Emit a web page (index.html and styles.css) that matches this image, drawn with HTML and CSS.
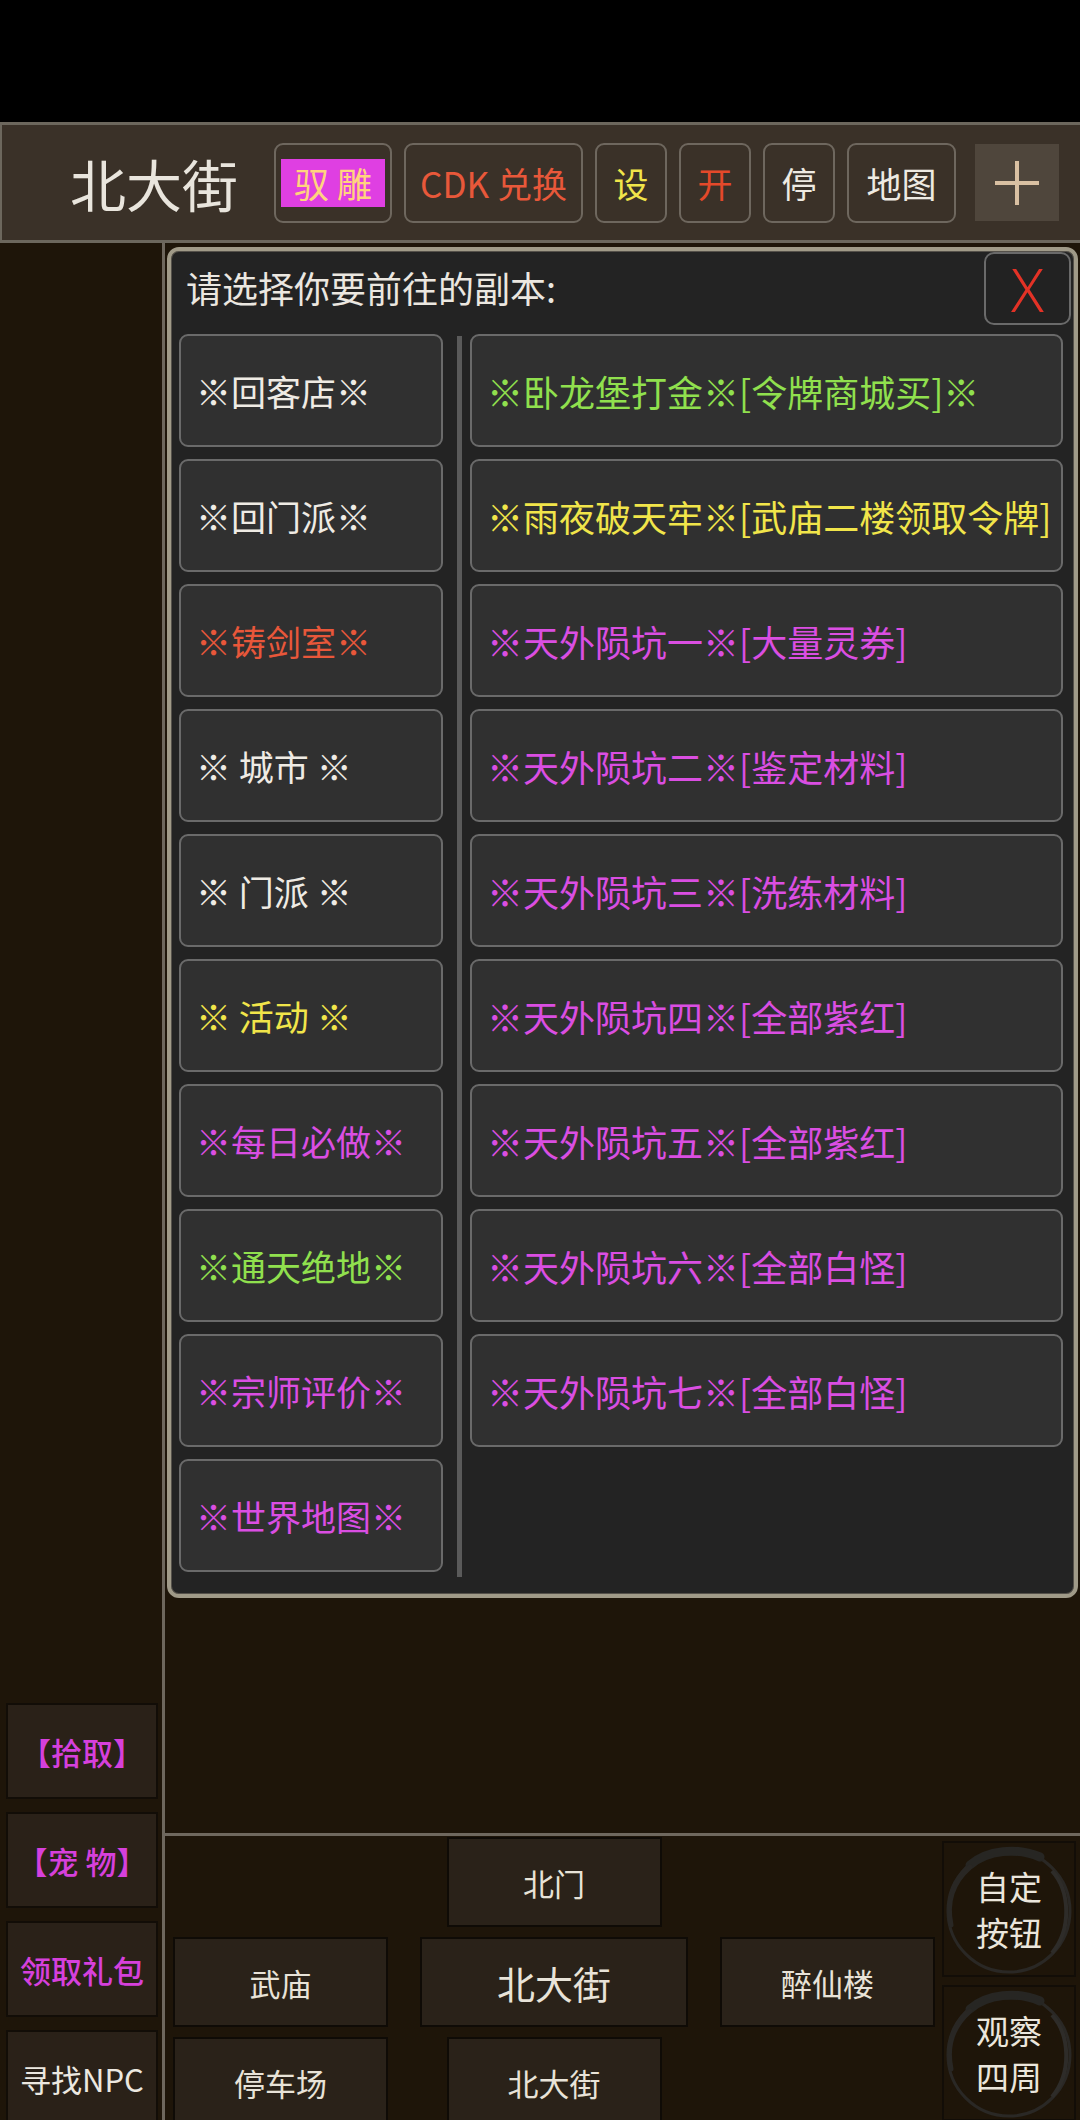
FILE: index.html
```html
<!DOCTYPE html>
<html lang="zh-CN">
<head>
<meta charset="utf-8">
<title>北大街</title>
<link rel="stylesheet" href="styles.css">
</head>
<body>
<div class="app">
  <div class="statusbar"></div>
  <header class="topbar">
    <h1 class="loc">北大街</h1>
    <div class="tools">
      <button class="tbtn w-diao"><span class="diao">驭 雕</span></button>
      <button class="tbtn w-cdk c-orange">CDK 兑换</button>
      <button class="tbtn w-sm c-yellow">设</button>
      <button class="tbtn w-sm c-red">开</button>
      <button class="tbtn w-sm">停</button>
      <button class="tbtn w-map">地图</button>
      <button class="plus" aria-label="更多">
        <svg width="84" height="77" viewBox="0 0 84 77"><path d="M20 39H64M42 17V61" stroke="#d9c0a2" stroke-width="4" fill="none"/></svg>
      </button>
    </div>
  </header>
  <div class="content">
    <aside class="side">
      <button class="sbtn c-mag">【拾取】</button>
      <button class="sbtn c-mag">【宠 物】</button>
      <button class="sbtn c-mag">领取礼包</button>
      <button class="sbtn">寻找NPC</button>
    </aside>
    <main class="stage">
      <section class="dialog">
        <div class="dlg-head">
          <span class="dlg-title">请选择你要前往的副本:</span>
          <button class="close">X</button>
        </div>
        <div class="dlg-body">
          <div class="col col-left">
            <div class="cell">※回客店※</div>
            <div class="cell">※回门派※</div>
            <div class="cell c-orange">※铸剑室※</div>
            <div class="cell">※ 城市 ※</div>
            <div class="cell">※ 门派 ※</div>
            <div class="cell c-yellow">※ 活动 ※</div>
            <div class="cell c-mag">※每日必做※</div>
            <div class="cell c-green">※通天绝地※</div>
            <div class="cell c-mag">※宗师评价※</div>
            <div class="cell c-mag">※世界地图※</div>
          </div>
          <div class="sep"></div>
          <div class="col col-right">
            <div class="cell c-green">※卧龙堡打金※[令牌商城买]※</div>
            <div class="cell c-yellow">※雨夜破天牢※[武庙二楼领取令牌]</div>
            <div class="cell c-mag">※天外陨坑一※[大量灵券]</div>
            <div class="cell c-mag">※天外陨坑二※[鉴定材料]</div>
            <div class="cell c-mag">※天外陨坑三※[洗练材料]</div>
            <div class="cell c-mag">※天外陨坑四※[全部紫红]</div>
            <div class="cell c-mag">※天外陨坑五※[全部紫红]</div>
            <div class="cell c-mag">※天外陨坑六※[全部白怪]</div>
            <div class="cell c-mag">※天外陨坑七※[全部白怪]</div>
          </div>
        </div>
      </section>
      <div class="spacer"></div>
      <nav class="nav">
        <div class="nav-grid">
          <button class="nbtn n-north">北门</button>
          <button class="nbtn n-west">武庙</button>
          <button class="nbtn n-here">北大街</button>
          <button class="nbtn n-east">醉仙楼</button>
          <button class="nbtn n-sw">停车场</button>
          <button class="nbtn n-south">北大街</button>
        </div>
        <div class="nav-tools">
          <button class="ring-btn">
            <svg class="ring" width="134" height="136" viewBox="0 0 134 136"><circle cx="67" cy="70" r="61" stroke="#2a2825" stroke-width="3" fill="none"/><path d="M28 24C45 9 75 6 98 16" stroke="#272623" stroke-width="9" fill="none" stroke-linecap="round"/><path d="M9 84C4 60 12 40 28 26" stroke="#292724" stroke-width="5" fill="none" stroke-linecap="round"/><path d="M110 30C128 50 130 88 110 112" stroke="#2e2c29" stroke-width="4" fill="none"/></svg>
            <span class="ring-txt">自定<br>按钮</span>
          </button>
          <button class="ring-btn">
            <svg class="ring" width="134" height="136" viewBox="0 0 134 136"><circle cx="67" cy="70" r="61" stroke="#2a2825" stroke-width="3" fill="none"/><path d="M28 24C45 9 75 6 98 16" stroke="#272623" stroke-width="9" fill="none" stroke-linecap="round"/><path d="M9 84C4 60 12 40 28 26" stroke="#292724" stroke-width="5" fill="none" stroke-linecap="round"/><path d="M110 30C128 50 130 88 110 112" stroke="#2e2c29" stroke-width="4" fill="none"/></svg>
            <span class="ring-txt">观察<br>四周</span>
          </button>
        </div>
      </nav>
    </main>
  </div>
</div>
</body>
</html>
```
FILE: styles.css
```css
* { box-sizing: border-box; }
html, body { margin: 0; padding: 0; }
body {
  width: 1080px;
  height: 2120px;
  overflow: hidden;
  background: #1e1509;
  font-family: "Noto Sans CJK SC", "Noto Sans", sans-serif;
  color: #ece8e0;
}
button {
  font-family: inherit;
  color: inherit;
  padding: 0;
  margin: 0;
  cursor: pointer;
}
.app { display: flex; flex-direction: column; height: 2120px; }

.statusbar { height: 122px; background: #000; flex: none; }

.topbar {
  flex: none;
  height: 121px;
  background: #3a3128;
  border-top: 3px solid #6c675d;
  border-bottom: 3px solid #6c675d;
  border-left: 2px solid #6c675d;
  display: flex;
  align-items: center;
  padding-left: 68px;
}
.loc {
  margin: 0;
  font-size: 56px;
  font-weight: 400;
  color: #e9e5dd;
  line-height: 1;
  width: 170px;
  flex: none;
  white-space: nowrap;
}
.tools { display: flex; align-items: center; gap: 12px; margin-left: 34px; }
.tbtn {
  height: 80px;
  border: 2px solid #6e675e;
  border-radius: 9px;
  background: #3a3128;
  font-size: 35px;
  line-height: 1;
  color: #eeeae2;
  display: flex;
  align-items: center;
  justify-content: center;
  white-space: nowrap;
  flex: none;
}
.w-diao { width: 118px; }
.w-cdk { width: 179px; }
.w-sm { width: 72px; }
.w-map { width: 109px; margin-right: 7px; }
.diao {
  display: flex; align-items: center; justify-content: center;
  width: 104px; height: 48px;
  background: #df3fe2;
  color: #ffd47e;
  font-size: 35px;
}
.plus {
  width: 84px; height: 77px;
  background: #4f463c;
  border: none;
  display: flex;
  flex: none;
}

.c-orange { color: #e8583a; }
.c-red { color: #e4492a; }
.c-yellow { color: #f1e54a; }
.c-green { color: #8fe04e; }
.c-mag { color: #da4ee2; }

.content { flex: 1; display: flex; min-height: 0; }

.side {
  width: 165px;
  flex: none;
  border-right: 3px solid #6e675d;
  display: flex;
  flex-direction: column;
  justify-content: flex-end;
  gap: 13px;
  padding-left: 6px;
}
.sbtn {
  width: 152px;
  height: 96px;
  flex: none;
  background: #2a2118;
  border: 2px solid #120d07;
  font-size: 31px;
  color: #ece8e0;
  white-space: nowrap;
}
.sbtn.c-mag { color: #d640dc; font-weight: 500; }
.sbtn:last-child { margin-bottom: -6px; }

.stage { flex: 1; display: flex; flex-direction: column; min-width: 0; }

.dialog {
  margin: 4px 2px 0 2px;
  background: #232323;
  border: 4px solid #a09a88;
  border-radius: 12px;
  box-shadow: inset 0 0 0 1px #55514a;
}
.dlg-head {
  height: 83px;
  display: flex;
  justify-content: space-between;
  align-items: flex-start;
  padding: 0 3px 0 15px;
}
.dlg-title {
  font-size: 36px;
  line-height: 36px;
  margin-top: 18px;
  color: #ebe7e0;
}
.close {
  width: 87px;
  height: 73px;
  margin-top: 1px;
  background: #222;
  border: 2px solid #6a6a6a;
  border-radius: 10px;
  font-family: "Noto Sans", sans-serif;
  font-weight: 300;
  font-size: 60px;
  line-height: 1;
  color: #e33226;
}
.dlg-body {
  display: flex;
  padding: 0 11px 22px 8px;
}
.col { display: flex; flex-direction: column; gap: 12px; }
.col-left { width: 264px; flex: none; }
.col-right { flex: 1; }
.sep {
  width: 5px;
  flex: none;
  background: #5a5a5a;
  margin: 2px 8px -5px 14px;
}
.cell {
  height: 113px;
  flex: none;
  background: #303030;
  border: 2px solid #6a6a6a;
  border-radius: 9px;
  display: flex;
  align-items: center;
  padding-left: 15px;
  font-size: 35px;
  white-space: nowrap;
  color: #efebe4;
}
.col-right .cell { font-size: 36px; }
.cell.c-mag { color: #da4ee2; }
.cell.c-green { color: #90e04e; }
.cell.c-yellow { color: #f1e54a; }
.cell.c-orange { color: #e8573a; }

.spacer { flex: 1; }

.nav {
  flex: none;
  height: 287px;
  border-top: 3px solid #6f685e;
  display: flex;
  padding: 1px 0 0 8px;
}
.nav-grid {
  display: grid;
  grid-template-columns: 215px 268px 215px;
  grid-template-rows: 90px 90px 90px;
  column-gap: 32px;
  row-gap: 10px;
}
.nbtn {
  background: #2a2219;
  border: 2px solid #0f0b06;
  font-size: 31px;
  color: #e8e3d8;
}
.n-north { grid-column: 2; grid-row: 1; width: 215px; justify-self: center; }
.n-west { grid-column: 1; grid-row: 2; }
.n-here { grid-column: 2; grid-row: 2; font-size: 38px; }
.n-east { grid-column: 3; grid-row: 2; }
.n-sw { grid-column: 1; grid-row: 3; }
.n-south { grid-column: 2; grid-row: 3; width: 215px; justify-self: center; }

.nav-tools {
  margin-left: 7px;
  padding-top: 4px;
  display: flex;
  flex-direction: column;
  gap: 8px;
}
.ring-btn {
  position: relative;
  width: 134px;
  height: 136px;
  flex: none;
  background: #1e1509;
  border: 2px solid #120d07;
  display: flex;
  align-items: center;
  justify-content: center;
}
.ring { position: absolute; left: -2px; top: -2px; }
.ring-txt {
  position: relative;
  font-size: 33px;
  line-height: 46px;
  color: #ebe6dc;
  text-align: center;
}
```
